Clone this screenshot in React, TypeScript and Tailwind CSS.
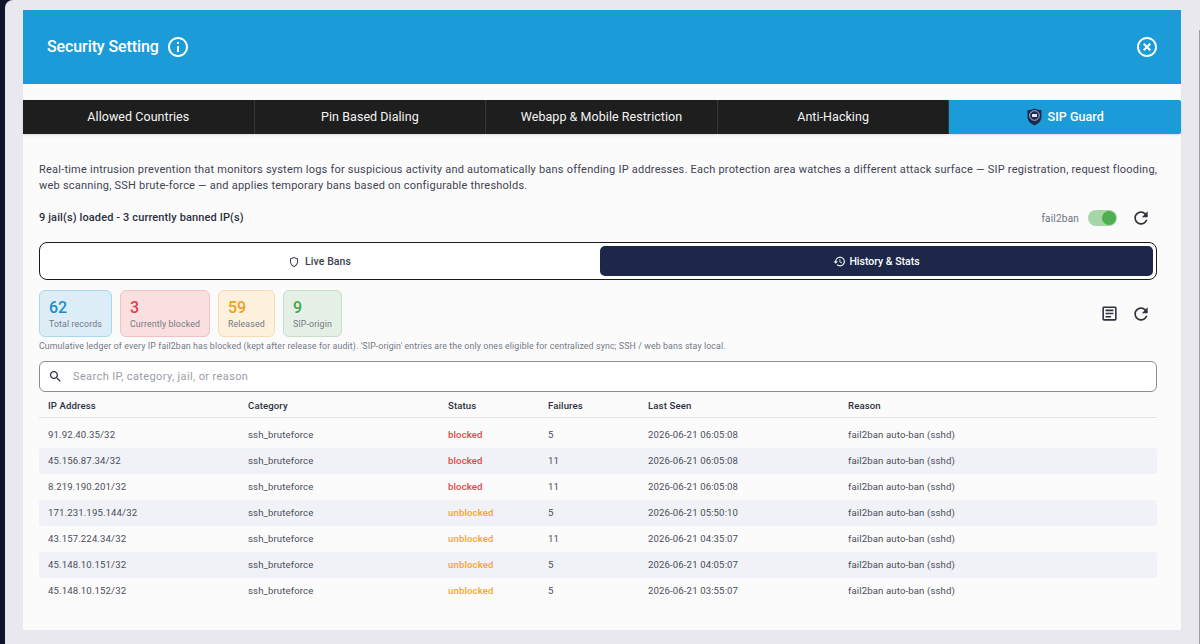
import React from "react";

const rows = [
  ["91.92.40.35/32", "blocked", "5", "2026-06-21 06:05:08"],
  ["45.156.87.34/32", "blocked", "11", "2026-06-21 06:05:08"],
  ["8.219.190.201/32", "blocked", "11", "2026-06-21 06:05:08"],
  ["171.231.195.144/32", "unblocked", "5", "2026-06-21 05:50:10"],
  ["43.157.224.34/32", "unblocked", "11", "2026-06-21 04:35:07"],
  ["45.148.10.151/32", "unblocked", "5", "2026-06-21 04:05:07"],
  ["45.148.10.152/32", "unblocked", "5", "2026-06-21 03:55:07"],
];

function Icon({ d, size, className }: { d: string; size: number; className?: string }) {
  return (
    <svg width={size} height={size} viewBox="0 0 24 24" fill="currentColor" className={className}>
      <path d={d} />
    </svg>
  );
}

const REFRESH = "M17.65 6.35C16.2 4.9 14.21 4 12 4c-4.42 0-7.99 3.58-7.99 8s3.57 8 7.99 8c3.73 0 6.84-2.55 7.73-6h-2.08c-.82 2.33-3.04 4-5.65 4-3.31 0-6-2.69-6-6s2.69-6 6-6c1.66 0 3.14.69 4.22 1.78L13 11h7V4l-2.35 2.35z";
const INFO = "M11 7h2v2h-2zm0 4h2v6h-2zm1-9C6.48 2 2 6.48 2 12s4.48 10 10 10 10-4.48 10-10S17.52 2 12 2zm0 18c-4.41 0-8-3.59-8-8s3.59-8 8-8 8 3.59 8 8-3.59 8-8 8z";
const CLOSE = "M14.59 8L12 10.59 9.41 8 8 9.41 10.59 12 8 14.59 9.41 16 12 13.41 14.59 16 16 14.59 13.41 12 16 9.41 14.59 8zM12 2C6.47 2 2 6.47 2 12s4.47 10 10 10 10-4.47 10-10S17.53 2 12 2zm0 18c-4.41 0-8-3.59-8-8s3.59-8 8-8 8 3.59 8 8-3.59 8-8 8z";
const SHIELD = "M12 2L4 5v6.09c0 5.05 3.41 9.76 8 10.91 4.59-1.15 8-5.86 8-10.91V5l-8-3zm6 9.09c0 4-2.55 7.7-6 8.83-3.45-1.13-6-4.82-6-8.83v-4.7l6-2.25 6 2.25v4.7z";
const HISTORY = "M13 3c-4.97 0-9 4.03-9 9H1l3.89 3.89.07.14L9 12H6c0-3.87 3.13-7 7-7s7 3.13 7 7-3.13 7-7 7c-1.93 0-3.68-.79-4.94-2.06l-1.42 1.42C8.27 19.99 10.51 21 13 21c4.97 0 9-4.03 9-9s-4.03-9-9-9zm-1 5v5l4.28 2.54.72-1.21-3.5-2.08V8H12z";
const SEARCH = "M15.5 14h-.79l-.28-.27C15.41 12.59 16 11.11 16 9.5 16 5.91 13.09 3 9.5 3S3 5.91 3 9.5 5.91 16 9.5 16c1.61 0 3.09-.59 4.23-1.57l.27.28v.79l5 4.99L20.49 19l-4.99-5zm-6 0C7.01 14 5 11.99 5 9.5S7.01 5 9.5 5 14 7.01 14 9.5 11.99 14 9.5 14z";
const ARTICLE = "M19 5v14H5V5h14m0-2H5c-1.1 0-2 .9-2 2v14c0 1.1.9 2 2 2h14c1.1 0 2-.9 2-2V5c0-1.1-.9-2-2-2z M14 17H7v-2h7v2zm3-4H7v-2h10v2zm0-4H7V7h10v2z";

function Stat({ value, label, box, color }: { value: string; label: string; box: string; color: string }) {
  return (
    <div className={`h-[47px] whitespace-nowrap rounded-[6px] border pl-[9px] pt-[7px] ${box}`}>
      <div className={`text-[16px] leading-[19px] font-medium ${color}`}>{value}</div>
      <div className="text-[8.8px] leading-[14px] tracking-[0.12px] text-[#737984]">{label}</div>
    </div>
  );
}

function ShieldLogo() {
  return (
    <svg width="15" height="18" viewBox="0 0 15 18" className="mr-[6px]">
      <path d="M7.5 0.5 C10 1.5 12.5 2 14.5 2 V9 C14.5 13 11 16 7.5 17.5 C4 16 0.5 13 0.5 9 V2 C2.5 2 5 1.5 7.5 0.5 Z" fill="#1c2a4d" />
      <circle cx="7.5" cy="7.5" r="4.8" fill="none" stroke="#b9c8dc" strokeWidth="0.9" />
      <rect x="5" y="6" width="5" height="3" fill="#dfe8f2" />
    </svg>
  );
}

export default function App() {
  const tab = "flex h-[34px] items-center justify-center text-[12.5px] tracking-[0.05px] shadow-sm";
  return (
    <div className="relative h-[644px] w-[1200px] overflow-hidden bg-[#10152a] pl-[5px] font-['Roboto',sans-serif]">
      <div className="h-full w-[1195px] rounded-tl-[8px] bg-[#e8e8ee] pl-[18px] pt-[10px]">
        <div className="w-[1158px]">
          <div className="flex h-[74px] items-center justify-between bg-[#1b9cd9] pl-[24px] pr-[22px] text-white">
            <div className="flex items-center gap-[7px]">
              <span className="text-[16px] font-medium tracking-[-0.1px]">Security Setting</span>
              <Icon d={INFO} size={24} />
            </div>
            <Icon d={CLOSE} size={24} />
          </div>
          <div className="h-[546px] bg-[#fbfbfc]">
            <div className="grid h-[50px] grid-cols-5 pt-[16px]">
              {["Allowed Countries", "Pin Based Dialing", "Webapp & Mobile Restriction", "Anti-Hacking"].map((t) => (
                <div key={t} className={`${tab} border-r border-r-[#3a3a3a] bg-[#1e1e1e] font-normal text-[#f4f4f4]`}>{t}</div>
              ))}
              <div className={`${tab} rounded-r-[2px] bg-[#1b9cd9] font-medium text-white`}>
                <ShieldLogo />
                SIP Guard
              </div>
            </div>
            <div className="px-[16px]">
              <p className="mt-[28px] whitespace-nowrap text-[11px] leading-[16px] tracking-[0.22px] text-[#3f4350]">
                Real-time intrusion prevention that monitors system logs for suspicious activity and automatically bans offending IP addresses. Each protection area watches a different attack surface — SIP registration, request flooding,
                <br />
                web scanning, SSH brute-force — and applies temporary bans based on configurable thresholds.
              </p>
              <div className="mt-[12px] flex h-[24px] items-center justify-between">
                <span className="text-[11px] font-medium tracking-[0.12px] text-[#2c3040]">9 jail(s) loaded - 3 currently banned IP(s)</span>
                <div className="flex items-center pr-[14px]">
                  <span className="mr-[9px] text-[10px] tracking-[0.2px] text-[#6b7080]">fail2ban</span>
                  <div className="relative mr-[14px] h-[16px] w-[29px] rounded-full bg-[#a5d6a7]">
                    <div className="absolute right-[1px] top-[1px] h-[14px] w-[14px] rounded-full bg-[#4caf50]" />
                  </div>
                  <Icon d={REFRESH} size={20} className="text-[#2c3040]" />
                </div>
              </div>
              <div className="mt-[12px] flex h-[38px] w-[1118px] gap-[4px] rounded-[8px] border-[1.5px] border-[#1a1a1a] bg-white p-[3px]">
                <div className="flex flex-1 items-center justify-center gap-[5px] pt-[1px] text-[10.5px] font-medium tracking-[0.1px] text-[#3a3f4d]">
                  <Icon d={SHIELD} size={12} />
                  Live Bans
                </div>
                <div className="flex w-[553px] items-center justify-center gap-[3px] rounded-[5px] bg-[#1c2749] pt-[1px] text-[10.5px] font-medium text-white">
                  <Icon d={HISTORY} size={13} />
                  History &amp; Stats
                </div>
              </div>
              <div className="mt-[10px] flex items-center justify-between">
                <div className="flex gap-[8px]">
                  <Stat value="62" label="Total records" color="text-[#1b8ec9]" box="w-[73px] border-[#a9d7ec] bg-[#dcedf7]" />
                  <Stat value="3" label="Currently blocked" color="text-[#d8434c]" box="w-[90px] border-[#f0c2c4] bg-[#fadfe0]" />
                  <Stat value="59" label="Released" color="text-[#f0a020]" box="w-[57px] border-[#f8dcb0] bg-[#fdf0dc]" />
                  <Stat value="9" label="SIP-origin" color="text-[#44a648]" box="w-[59px] border-[#c5dec8] bg-[#e4f0e6]" />
                </div>
                <div className="flex items-center gap-[12px] pr-[14px]">
                  <Icon d={ARTICLE} size={19} className="text-[#2c3040]" />
                  <Icon d={REFRESH} size={20} className="text-[#2c3040]" />
                </div>
              </div>
              <p className="mt-[2px] text-[8.8px] leading-[14px] tracking-[0.11px] text-[#737984]">
                Cumulative ledger of every IP fail2ban has blocked (kept after release for audit). 'SIP-origin' entries are the only ones eligible for centralized sync; SSH / web bans stay local.
              </p>
              <div className="mt-[8px] flex h-[31px] w-[1118px] items-center rounded-[6px] border border-[#8a8d94] bg-white pl-[8px]">
                <Icon d={SEARCH} size={15} className="text-[#2c3040]" />
                <span className="ml-[10px] pt-[1px] text-[11px] tracking-[0.38px] text-[#9a9da6]">Search IP, category, jail, or reason</span>
              </div>
              <div className="mt-[3px] w-[1118px]">
                <div className="grid h-[23px] grid-cols-[200px_200px_100px_100px_200px_1fr] items-center border-b border-[#e3e5ea] pl-[9px] text-[9.6px] font-medium tracking-[0.12px] text-[#2c3040]">
                  <div>IP Address</div>
                  <div>Category</div>
                  <div>Status</div>
                  <div>Failures</div>
                  <div>Last Seen</div>
                  <div>Reason</div>
                </div>
                <div className="pt-[4px]">
                  {rows.map((r, i) => (
                    <div key={r[0]} className={`grid h-[26px] grid-cols-[200px_200px_100px_100px_200px_1fr] items-center rounded-[3px] pl-[9px] text-[9.6px] tracking-[0.12px] text-[#4a4e5a] ${i % 2 === 1 ? "bg-[#f0f2f7]" : ""}`}>
                      <div>{r[0]}</div>
                      <div>ssh_bruteforce</div>
                      <div className={`font-medium ${r[1] === "blocked" ? "text-[#e04848]" : "text-[#f5a623]"}`}>{r[1]}</div>
                      <div>{r[2]}</div>
                      <div>{r[3]}</div>
                      <div>fail2ban auto-ban (sshd)</div>
                    </div>
                  ))}
                </div>
              </div>
            </div>
          </div>
        </div>
      </div>
      <div className="absolute bottom-0 right-0 top-[30px] w-[1px] bg-[#9c9ca2]" />
    </div>
  );
}
